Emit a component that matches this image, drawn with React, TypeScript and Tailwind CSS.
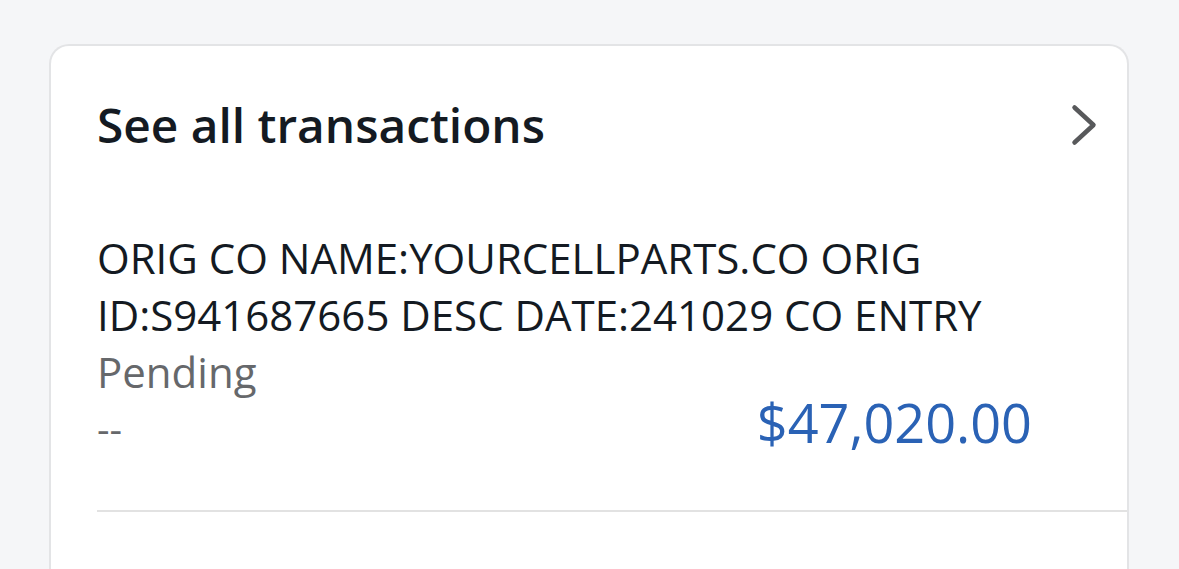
export default function App() {
  return (
    <div className="min-h-screen bg-[#f5f6f8] pl-[49px] pr-[50px] pt-[44px] overflow-hidden"
      style={{ fontFamily: '"Open Sans", "Liberation Sans", sans-serif' }}>
      <div className="h-[560px] rounded-t-[20px] border-2 border-b-0 border-[#e3e4e6] bg-white">
        <div className="flex items-center justify-between pl-[46px] pr-[28px] pt-[51px]">
          <h2 className="text-[47.8px] leading-[56px] font-semibold text-[#141a22]">See all transactions</h2>
          <svg width="30" height="44" viewBox="0 0 30 44" fill="none" stroke="#58595b"
            strokeWidth="4.5" strokeLinecap="round" strokeLinejoin="round">
            <polyline points="5.5,4.5 24.5,22 5.5,39.5" />
          </svg>
        </div>
        <div className="ml-[46px] mt-[76px] border-b-2 border-[#e2e2e2] pb-[60px]">
          <div className="w-[935px] text-[42px] leading-[57px] text-[#141a22]">
            ORIG CO NAME:YOURCELLPARTS.CO ORIG ID:S941687665 DESC DATE:241029 CO ENTRY
          </div>
          <div className="text-[42px] leading-[57px] text-[#66686b]">Pending</div>
          <div className="flex items-baseline justify-between w-[935px]">
            <span className="text-[39px] leading-[44px] text-[#66686b]">--</span>
            <span className="text-[54px] leading-[44px] text-[#2a62b5]">$47,020.00</span>
          </div>
        </div>
      </div>
    </div>
  )
}
